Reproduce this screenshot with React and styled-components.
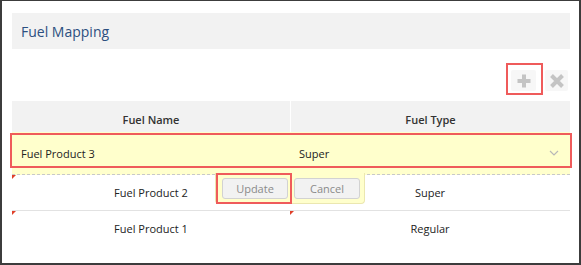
import styled, { createGlobalStyle } from "styled-components";

const GlobalStyle = createGlobalStyle`
  html, body {
    margin: 0;
    padding: 0;
    background: #ffffff;
  }
  body {
    font-family: "Open Sans", "Liberation Sans", sans-serif;
  }
`;

const Frame = styled.div`
  box-sizing: border-box;
  width: 581px;
  height: 265px;
  border: 2px solid #3c3c3c;
  border-top-width: 1px;
  padding: 12px 9px 0 10px;
  background: #ffffff;
`;

const TitleBar = styled.div`
  height: 36px;
  background: #f2f2f2;
  display: flex;
  align-items: center;
  padding-left: 9px;
  font-size: 14px;
  color: #2c4f80;
`;

const Toolbar = styled.div`
  height: 52px;
  display: flex;
  justify-content: flex-end;
  align-items: flex-start;
  padding-top: 14px;
  box-sizing: border-box;
`;

/* red annotation frame drawn around a marked control */
const Marker = styled.div`
  box-sizing: border-box;
  border: ${(p) => (p.$on ? "2px solid #ef5b5b" : "none")};
  padding: ${(p) => p.$pad};
  display: flex;
`;

const IconButton = styled.button`
  width: ${(p) => p.$w || "25px"};
  height: 21px;
  padding: 0;
  border: none;
  border-radius: 2px;
  background: #f7f7f7;
  display: flex;
  align-items: center;
  justify-content: center;
`;

const Table = styled.div`
  position: relative;
  font-size: 11px;
  color: #222222;
`;

const HeadRow = styled.div`
  display: grid;
  grid-template-columns: 278px 1fr;
  gap: 1px;
  height: 31px;
`;

const HeadCell = styled.div`
  background: #f2f2f2;
  display: flex;
  align-items: center;
  justify-content: center;
  padding-top: 6px;
  box-sizing: border-box;
  font-weight: 600;
  color: #333333;
`;

const EditRow = styled.div`
  background: #ffffcc;
  height: 43px;
  border-bottom: 1px dashed #c8c8c8;
  padding-top: 1px;
  box-sizing: border-box;
`;

const EditCells = styled.div`
  display: grid;
  grid-template-columns: 278px 1fr;
  height: 35px;
  margin-left: -2px;
  width: calc(100% + 4px);
  border: 2px solid #ef5b5b;
  box-sizing: border-box;
`;

const EditCell = styled.div`
  display: flex;
  align-items: center;
  justify-content: space-between;
  padding: 5px 11px 0 9px;
`;

const Chevron = styled.svg`
  width: 10px;
  height: 6px;
`;

const Row = styled.div`
  position: relative;
  display: grid;
  grid-template-columns: 278px 1fr;
  height: 36px;
  box-sizing: border-box;
  border-bottom: 1px solid ${(p) => (p.$divider ? "#e2e2e2" : "transparent")};
`;

const Cell = styled.div`
  position: relative;
  display: flex;
  align-items: center;
  justify-content: center;
  padding-bottom: 1px;
`;

const DirtyMark = styled.span`
  position: absolute;
  top: 0;
  left: 0;
  width: 0;
  height: 0;
  border-top: 4px solid #e0402a;
  border-right: 4px solid transparent;
`;

const Popup = styled.div`
  position: absolute;
  left: 203px;
  top: 72px;
  width: 150px;
  height: 31px;
  box-sizing: border-box;
  background: #ffffcc;
  border: 1px solid #ebe7b0;
  border-top: none;
  border-radius: 0 0 4px 4px;
  display: flex;
  align-items: flex-start;
  gap: 2px;
  z-index: 2;
`;

const ActionButton = styled.button`
  width: 66px;
  height: 21px;
  padding: 0;
  border: 1px solid #d2d2d2;
  border-radius: 3px;
  background: #f2f2f2;
  font-family: "Open Sans", "Liberation Sans", sans-serif;
  font-size: 11px;
  color: #8a8a8a;
  margin-top: ${(p) => p.$top || "0"};
`;

const rows = [
  { name: "Fuel Product 2", type: "Super", divider: true },
  { name: "Fuel Product 1", type: "Regular", divider: false },
];

export default function App() {
  return (
    <>
      <GlobalStyle />
      <Frame>
        <TitleBar>Fuel Mapping</TitleBar>
        <Toolbar>
          <Marker $on $pad="5px 5px 2px 3px">
            <IconButton>
              <svg width="16" height="16" viewBox="0 0 16 16">
                <path d="M8 1.5v13M1.5 8h13" stroke="#c4c4c4" strokeWidth="4" />
              </svg>
            </IconButton>
          </Marker>
          <Marker $pad="7px 2px 0 2px">
            <IconButton $w="23px">
              <svg width="16" height="16" viewBox="0 0 16 16">
                <path d="M2.5 2.5l11 11M13.5 2.5l-11 11" stroke="#c4c4c4" strokeWidth="4" />
              </svg>
            </IconButton>
          </Marker>
        </Toolbar>
        <Table>
          <HeadRow>
            <HeadCell>Fuel Name</HeadCell>
            <HeadCell>Fuel Type</HeadCell>
          </HeadRow>
          <EditRow>
            <EditCells>
              <EditCell>Fuel Product 3</EditCell>
              <EditCell>
                Super
                <Chevron viewBox="0 0 10 6">
                  <path d="M1 1l4 4 4-4" fill="none" stroke="#b8b8b8" strokeWidth="1.2" />
                </Chevron>
              </EditCell>
            </EditCells>
          </EditRow>
          <Popup>
            <Marker $on $pad="3px 2px 3px 4px">
              <ActionButton>Update</ActionButton>
            </Marker>
            <ActionButton $top="5px">Cancel</ActionButton>
          </Popup>
          {rows.map((r) => (
            <Row key={r.name} $divider={r.divider}>
              <Cell>
                <DirtyMark />
                {r.name}
              </Cell>
              <Cell>
                <DirtyMark />
                {r.type}
              </Cell>
            </Row>
          ))}
        </Table>
      </Frame>
    </>
  );
}
